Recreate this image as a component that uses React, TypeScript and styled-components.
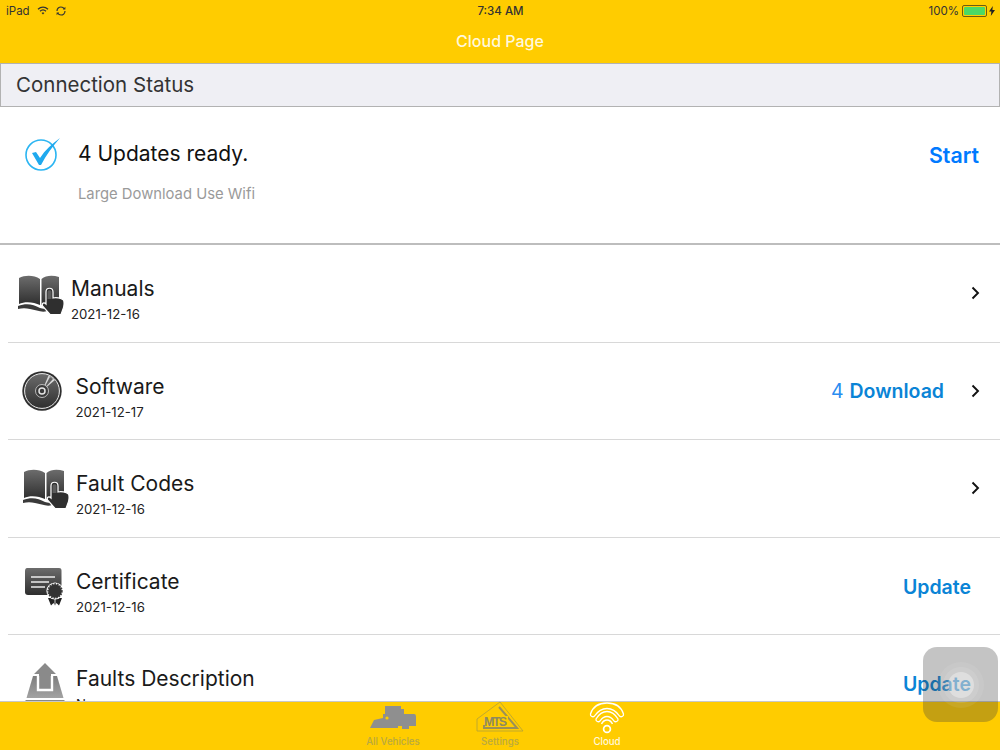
import styled, { createGlobalStyle } from "styled-components";
import { ReactNode } from "react";

const GlobalStyle = createGlobalStyle`
  html, body {
    margin: 0;
    padding: 0;
    background: #fff;
    font-family: Inter, "Liberation Sans", sans-serif;
  }
`;

const GradientDefs = () => (
  <svg width="0" height="0" style={{ position: "absolute" }}>
    <defs>
      <linearGradient id="darkIcon" x1="0" y1="0" x2="0" y2="1">
        <stop offset="0" stopColor="#6c6c6c" />
        <stop offset="1" stopColor="#2e2e2e" />
      </linearGradient>
      <linearGradient id="greyIcon" x1="0" y1="0" x2="0" y2="1">
        <stop offset="0" stopColor="#7e7e7e" />
        <stop offset="1" stopColor="#a2a2a2" />
      </linearGradient>
    </defs>
  </svg>
);

const BookIcon = () => (
  <svg width="46" height="40" viewBox="0 0 46 40">
    <path
      d="M1 3C7 0 16 0 22 4V30C16 27 7 26 1 29Z"
      fill="url(#darkIcon)"
    />
    <path
      d="M23.5 4C28 0 35 0 41 2V28C35 26 28 27 23.5 30Z"
      fill="url(#darkIcon)"
    />
    <path
      d="M0 31C8 28 15 29 22 33C25 34 27 34 29 33L29 36C24 38 18 35 12 34C8 33 4 33 0 34Z"
      fill="#3a3a3a"
    />
    <path
      d="M28 17C28 12 35 12 35 17V23C38 22 43 23 45.5 25C46.5 27 46 32 45 34L43 39.5H32L24.5 31C23.5 28 26 27 28 29Z"
      fill="#2f2f2f"
      stroke="#fff"
      strokeWidth="1.2"
    />
    <path d="M29.5 17C29.5 14.5 33.5 14.5 33.5 17V24H29.5Z" fill="#5c5c5c" />
  </svg>
);

const DiscIcon = () => (
  <svg width="40" height="40" viewBox="0 0 40 40">
    <circle cx="20" cy="20" r="19.7" fill="#2e2e2e" />
    <circle cx="20" cy="20" r="17.4" fill="url(#darkIcon)" stroke="#ececec" strokeWidth="1" />
    <path d="M20 20L26.5 4.5L33 9Z" fill="#d8d8d8" />
    <path d="M20.5 19.5L28 6L31 8Z" fill="#606060" />
    <circle cx="20" cy="20" r="6.5" fill="#3a3a3a" stroke="#d8d8d8" strokeWidth="0.8" />
    <circle cx="20" cy="20" r="3" fill="none" stroke="#e4e4e4" strokeWidth="1.5" />
  </svg>
);

const CertificateIcon = () => (
  <svg width="38" height="38" viewBox="0 0 38 38">
    <path
      d="M2 0H34C36 0 36.5 1 36.5 3V24C36.5 26 36 27 34 27H3C1 27 0 26 0 24V3C0 1 1 0 2 0Z"
      fill="url(#darkIcon)"
    />
    <path d="M6 9H30M6 14H24M6 19H20" stroke="#ececec" strokeWidth="1.6" />
    <path d="M23 30L26 37.5L28.5 35L30 37.5L31.5 35L34 37.5L37 30Z" fill="#222" />
    <path d="M30 31V37.5" stroke="#fff" strokeWidth="0.8" />
    <circle cx="30" cy="23" r="8.6" fill="#fff" />
    <circle cx="30" cy="23" r="6.8" fill="#333" stroke="#3c3c3c" strokeDasharray="1.6 1" strokeWidth="1.8" />
  </svg>
);

const UploadIcon = () => (
  <svg width="40" height="46" viewBox="0 0 40 46">
    <path d="M8 13H32L38.5 35H1.5Z" fill="url(#greyIcon)" />
    <path d="M20 0L31 11H26V26H14V11H9Z" fill="#8a8a8a" />
    <path d="M13 13V27H27V13" fill="none" stroke="#fff" strokeWidth="2.4" />
    <rect x="0.5" y="37" width="39" height="9" fill="#8a8a8a" />
  </svg>
);

const CheckIcon = () => (
  <svg width="36" height="34" viewBox="0 0 36 34">
    <circle cx="16" cy="18" r="15" fill="none" stroke="#2bb5f2" strokeWidth="1.6" />
    <path
      d="M7 16L11 15L15 21C20 13 27 7 35 1C28 9 21 18 16 28H14Z"
      fill="#1fa9ee"
    />
  </svg>
);

const ChevronIcon = () => (
  <svg width="9" height="14" viewBox="0 0 9 14">
    <path d="M1.5 1.5L7 7L1.5 12.5" fill="none" stroke="#111" strokeWidth="1.9" />
  </svg>
);

const VehiclesIcon = () => (
  <svg width="48" height="24" viewBox="0 0 48 24">
    <path
      d="M16 0H32V3H35V8H45C47 8 47 10 47 12V20H40V23H33V20H29V22H1L5 14L14 12V8H16Z"
      fill="#8f8f8f"
    />
    <circle cx="18" cy="12" r="1.6" fill="#ffcc00" />
  </svg>
);

const SettingsLogo = () => (
  <svg width="48" height="32" viewBox="0 0 48 32">
    <path d="M24 1L47 30H1V18Z" fill="none" stroke="#baa532" strokeWidth="0.9" />
    <path d="M23 6L41 27H8V22" fill="none" stroke="#9b9057" strokeWidth="2" />
    <rect x="7" y="15" width="25" height="9" fill="#ffcc00" />
    <text x="8" y="24.5" fontFamily="Liberation Sans, sans-serif" fontWeight="700" fontSize="12.5" fill="#8f8a5f" textLength="23">
      MTS
    </text>
  </svg>
);

const CloudWifiIcon = () => (
  <svg width="36" height="32" viewBox="0 0 36 32" fill="none" stroke="#fff" strokeLinejoin="round">
    <path d="M1.5 12C4 4 11 1 18 1C25 1 32 4 34.5 12C35 14.5 32 15.5 30.5 14C27 9 23 6.5 18 6.5C13 6.5 9 9 5.5 14C4 15.5 1 14.5 1.5 12Z" strokeWidth="1.3" />
    <path d="M7 17C10 12 14 9.5 18 9.5C22 9.5 26 12 29 17C29.5 19.5 26.5 20.5 25 19C23 16 21 14.5 18 14.5C15 14.5 13 16 11 19C9.5 20.5 6.5 19.5 7 17Z" strokeWidth="1.3" />
    <path d="M12.5 22C14 19 16 18 18 18C20 18 22 19 23.5 22" strokeWidth="1.5" />
    <circle cx="18" cy="27" r="3.4" strokeWidth="1.7" />
  </svg>
);

const WifiGlyph = () => (
  <svg width="12" height="9" viewBox="0 0 12 9" fill="none" stroke="#333">
    <path d="M1 3.2C4 .5 8 .5 11 3.2" strokeWidth="1.3" />
    <path d="M3 5.2C4.8 3.6 7.2 3.6 9 5.2" strokeWidth="1.3" />
    <path d="M6 8.6L4.6 7C5.4 6.4 6.6 6.4 7.4 7Z" fill="#333" stroke="none" />
  </svg>
);

const SyncGlyph = () => (
  <svg width="10" height="10" viewBox="0 0 10 10" fill="none" stroke="#333" strokeWidth="1.2">
    <path d="M1 5C1 2.5 3 1 5 1C6.5 1 7.5 1.6 8.4 2.8" />
    <path d="M9 5C9 7.5 7 9 5 9C3.5 9 2.5 8.4 1.6 7.2" />
    <path d="M9.4 .8V3.6H6.8Z" fill="#333" stroke="none" />
    <path d="M.6 9.2V6.4H3.2Z" fill="#333" stroke="none" />
  </svg>
);

const BoltGlyph = () => (
  <svg width="6" height="10" viewBox="0 0 6 10">
    <path d="M3.8 0L0 5.6H2.4L1.8 10L6 4H3.4Z" fill="#222" />
  </svg>
);

const Page = styled.div`
  position: relative;
  width: 1000px;
  height: 750px;
  display: flex;
  flex-direction: column;
  overflow: hidden;
  background: #fff;
`;

const TopBar = styled.header`
  height: 63px;
  flex-shrink: 0;
  background: #ffcc00;
  display: flex;
  flex-direction: column;
`;

const StatusBar = styled.div`
  height: 21px;
  padding: 0 5px 0 6px;
  display: grid;
  grid-template-columns: 1fr auto 1fr;
  align-items: center;
  font-size: 11.5px;
  color: #333;
`;

const StatusLeft = styled.div`
  display: flex;
  align-items: center;
  gap: 7px;
`;

const StatusCenter = styled.div`
  font-weight: 500;
`;

const StatusRight = styled.div`
  display: flex;
  align-items: center;
  justify-content: flex-end;
  gap: 2px;
`;

const Battery = styled.div`
  width: 21px;
  height: 8px;
  border: 1px solid #6d5c10;
  border-radius: 2px;
  padding: 1px;
  margin-left: 1px;
  display: flex;
`;

const BatteryFill = styled.div`
  flex: 1;
  background: #4cd964;
  border-radius: 1px;
`;

const NavTitle = styled.div`
  flex: 1;
  display: flex;
  align-items: center;
  justify-content: center;
  padding-bottom: 3px;
  color: #fff8dc;
  font-size: 16px;
  font-weight: 500;
`;

const SectionHeader = styled.div`
  height: 44px;
  flex-shrink: 0;
  box-sizing: border-box;
  border: 1px solid #b2b2b2;
  background: #efeff4;
  padding: 0 15px 1px;
  display: flex;
  align-items: center;
  font-size: 20.5px;
  color: #333;
`;

const StatusCard = styled.section`
  height: 138px;
  flex-shrink: 0;
  box-sizing: border-box;
  border-bottom: 2px solid #bdbdbd;
  padding: 30px 20px 0 25px;
  display: flex;
  align-items: flex-start;
  gap: 17px;
`;

const StatusText = styled.div`
  flex: 1;
  padding-top: 4px;
`;

const ReadyTitle = styled.div`
  font-size: 21px;
  line-height: 26px;
  color: #111;
`;

const ReadyNote = styled.div`
  margin-top: 18px;
  font-size: 14.8px;
  line-height: 18px;
  color: #9a9a9a;
`;

const StartButton = styled.span`
  margin-top: 5px;
  margin-right: 1px;
  font-size: 21.3px;
  font-weight: 600;
  color: #007aff;
`;

const List = styled.div`
  flex: 1;
  min-height: 0;
  overflow: hidden;
`;

const Row = styled.div<{ $iconLeft: number; $gap: number }>`
  height: 97.5px;
  box-sizing: border-box;
  margin-left: 8px;
  padding: 0 20px 0 ${(p) => p.$iconLeft - 8}px;
  border-bottom: 1px solid #d8d8d8;
  display: flex;
  align-items: flex-start;
  gap: ${(p) => p.$gap}px;
`;

const RowIcon = styled.div<{ $top: number; $width: number }>`
  width: ${(p) => p.$width}px;
  flex-shrink: 0;
  padding-top: ${(p) => p.$top}px;
  display: flex;
`;

const RowText = styled.div`
  flex: 1;
  padding-top: 31px;
`;

const RowTitle = styled.div`
  font-size: 21px;
  line-height: 26px;
  color: #1a1a1a;
`;

const RowDate = styled.div`
  margin-top: 4px;
  font-size: 13.2px;
  line-height: 16px;
  color: #222;
`;

const RowAction = styled.div<{ $right: number; $top: number }>`
  display: flex;
  align-items: center;
  height: 26px;
  margin-top: ${(p) => p.$top}px;
  margin-right: ${(p) => p.$right}px;
  font-size: 19.5px;
  font-weight: 600;
  color: #0a84d6;
`;

const Count = styled.span`
  font-weight: 400;
  color: #2a8cf0;
  margin-right: 6px;
`;

const Chevron = styled.div`
  display: flex;
  margin-left: 27px;
`;

const TabBar = styled.nav`
  height: 49px;
  flex-shrink: 0;
  box-sizing: border-box;
  border-top: 1px solid #c8c8c8;
  background: #ffcc00;
  display: flex;
  justify-content: center;
  align-items: flex-start;
  gap: 49px;
`;

const Tab = styled.div`
  width: 58px;
  height: 48px;
  display: flex;
  flex-direction: column;
  align-items: center;
  justify-content: flex-end;
  padding-bottom: 2px;
  box-sizing: border-box;
`;

const TabLabel = styled.span<{ $active?: boolean }>`
  font-size: 9.7px;
  line-height: 12px;
  font-weight: 500;
  white-space: nowrap;
  color: ${(p) => (p.$active ? "#fff8dc" : "#b9a93f")};
`;

const TabIcon = styled.div<{ $drop: number }>`
  display: flex;
  margin-bottom: ${(p) => p.$drop}px;
`;

const TouchButton = styled.div`
  position: absolute;
  left: 923px;
  top: 647px;
  width: 75px;
  height: 75px;
  border-radius: 14px;
  background: rgba(60, 60, 60, 0.3);
  display: flex;
  align-items: center;
  justify-content: center;
`;

const TouchRing = styled.div<{ $size: number; $alpha: number }>`
  width: ${(p) => p.$size}px;
  height: ${(p) => p.$size}px;
  border-radius: 50%;
  background: rgba(255, 255, 255, ${(p) => p.$alpha});
  display: flex;
  align-items: center;
  justify-content: center;
`;

interface RowData {
  title: string;
  date: string;
  icon: ReactNode;
  iconLeft: number;
  iconWidth: number;
  iconTop: number;
  gap: number;
  count?: number;
  action?: string;
  chevron?: boolean;
}

const rows: RowData[] = [
  { title: "Manuals", date: "2021-12-16", icon: <BookIcon />, iconLeft: 18, iconWidth: 46, iconTop: 30, gap: 7, chevron: true },
  { title: "Software", date: "2021-12-17", icon: <DiscIcon />, iconLeft: 22, iconWidth: 40, iconTop: 28, gap: 13.5, count: 4, action: "Download", chevron: true },
  { title: "Fault Codes", date: "2021-12-16", icon: <BookIcon />, iconLeft: 23, iconWidth: 46, iconTop: 29, gap: 7, chevron: true },
  { title: "Certificate", date: "2021-12-16", icon: <CertificateIcon />, iconLeft: 25, iconWidth: 38, iconTop: 30, gap: 13, action: "Update" },
  { title: "Faults Description", date: "None", icon: <UploadIcon />, iconLeft: 25, iconWidth: 40, iconTop: 28, gap: 11, action: "Update" },
];

const App = () => {
  return (
    <Page>
      <GlobalStyle />
      <GradientDefs />
      <TopBar>
        <StatusBar>
          <StatusLeft>
            <span>iPad</span>
            <WifiGlyph />
            <SyncGlyph />
          </StatusLeft>
          <StatusCenter>7:34 AM</StatusCenter>
          <StatusRight>
            <span>100%</span>
            <Battery>
              <BatteryFill />
            </Battery>
            <BoltGlyph />
          </StatusRight>
        </StatusBar>
        <NavTitle>Cloud Page</NavTitle>
      </TopBar>

      <SectionHeader>Connection Status</SectionHeader>

      <StatusCard>
        <CheckIcon />
        <StatusText>
          <ReadyTitle>4 Updates ready.</ReadyTitle>
          <ReadyNote>Large Download Use Wifi</ReadyNote>
        </StatusText>
        <StartButton>Start</StartButton>
      </StatusCard>

      <List>
        {rows.map((row) => (
          <Row key={row.title} $iconLeft={row.iconLeft} $gap={row.gap}>
            <RowIcon $top={row.iconTop} $width={row.iconWidth}>
              {row.icon}
            </RowIcon>
            <RowText>
              <RowTitle>{row.title}</RowTitle>
              <RowDate>{row.date}</RowDate>
            </RowText>
            {(row.action || row.chevron) && (
              <RowAction $right={row.chevron ? 0 : 9} $top={row.chevron ? 35 : 36}>
                {row.count && <Count>{row.count}</Count>}
                {row.action}
                {row.chevron && (
                  <Chevron>
                    <ChevronIcon />
                  </Chevron>
                )}
              </RowAction>
            )}
          </Row>
        ))}
      </List>

      <TabBar>
        <Tab>
          <TabIcon $drop={6}>
            <VehiclesIcon />
          </TabIcon>
          <TabLabel>All Vehicles</TabLabel>
        </Tab>
        <Tab>
          <TabIcon $drop={3}>
            <SettingsLogo />
          </TabIcon>
          <TabLabel>Settings</TabLabel>
        </Tab>
        <Tab>
          <TabIcon $drop={2}>
            <CloudWifiIcon />
          </TabIcon>
          <TabLabel $active>Cloud</TabLabel>
        </Tab>
      </TabBar>

      <TouchButton>
        <TouchRing $size={46} $alpha={0.08}>
          <TouchRing $size={36} $alpha={0.1}>
            <TouchRing $size={26} $alpha={0.35} />
          </TouchRing>
        </TouchRing>
      </TouchButton>
    </Page>
  );
};

export default App;
